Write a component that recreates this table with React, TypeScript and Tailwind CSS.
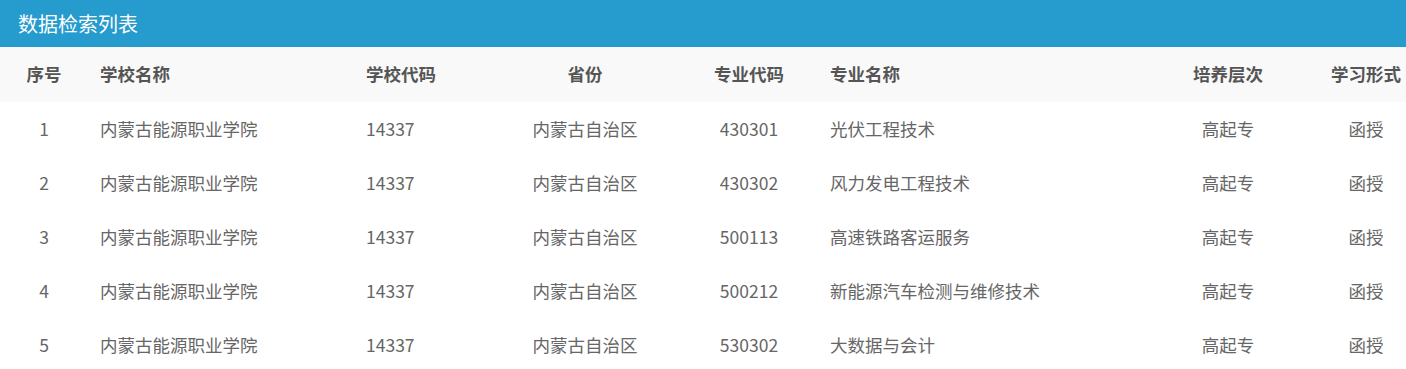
import React from 'react';

interface Row {
  id: number;
  school: string;
  schoolCode: string;
  province: string;
  majorCode: string;
  majorName: string;
  level: string;
  mode: string;
}

const rows: Row[] = [
  { id: 1, school: '内蒙古能源职业学院', schoolCode: '14337', province: '内蒙古自治区', majorCode: '430301', majorName: '光伏工程技术', level: '高起专', mode: '函授' },
  { id: 2, school: '内蒙古能源职业学院', schoolCode: '14337', province: '内蒙古自治区', majorCode: '430302', majorName: '风力发电工程技术', level: '高起专', mode: '函授' },
  { id: 3, school: '内蒙古能源职业学院', schoolCode: '14337', province: '内蒙古自治区', majorCode: '500113', majorName: '高速铁路客运服务', level: '高起专', mode: '函授' },
  { id: 4, school: '内蒙古能源职业学院', schoolCode: '14337', province: '内蒙古自治区', majorCode: '500212', majorName: '新能源汽车检测与维修技术', level: '高起专', mode: '函授' },
  { id: 5, school: '内蒙古能源职业学院', schoolCode: '14337', province: '内蒙古自治区', majorCode: '530302', majorName: '大数据与会计', level: '高起专', mode: '函授' },
];

// column widths add up to the 1406px window
const cols = 'grid grid-cols-[88px_266px_136px_190px_138px_342px_136px_110px] items-center';

const App: React.FC = () => {
  return (
    <div className="w-[1406px] bg-white font-['Microsoft_YaHei','Noto_Sans_CJK_SC',sans-serif]">
      <div className="h-[47px] bg-[#269bcd] flex items-center pl-[18px]">
        <h1 className="text-[20px] text-white leading-none">数据检索列表</h1>
      </div>

      <div className={`${cols} h-[55px] bg-[#f9f9f9] text-[17.5px] font-bold text-[#555]`}>
        <div className="text-center">序号</div>
        <div className="pl-[12px]">学校名称</div>
        <div className="pl-[12px]">学校代码</div>
        <div className="text-center">省份</div>
        <div className="text-center">专业代码</div>
        <div className="pl-[12px]">专业名称</div>
        <div className="text-center">培养层次</div>
        <div className="pl-[30px] text-center">学习形式</div>
      </div>

      {rows.map((r) => (
        <div key={r.id} className={`${cols} h-[54px] text-[17.5px] text-[#666]`}>
          <div className="text-center">{r.id}</div>
          <div className="pl-[12px]">{r.school}</div>
          <div className="pl-[12px]">{r.schoolCode}</div>
          <div className="text-center">{r.province}</div>
          <div className="text-center">{r.majorCode}</div>
          <div className="pl-[12px]">{r.majorName}</div>
          <div className="text-center">{r.level}</div>
          <div className="pl-[30px] text-center">{r.mode}</div>
        </div>
      ))}
    </div>
  );
};

export default App;
